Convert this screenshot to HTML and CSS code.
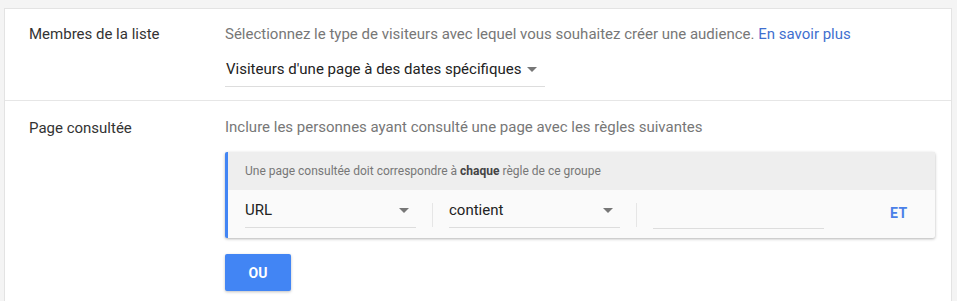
FILE: index.html
```html
<!DOCTYPE html>
<html lang="fr">
<head>
  <meta charset="UTF-8" />
  <title>Audience</title>
  <link rel="stylesheet" href="styles.css">
</head>
<body>
  <div class="card">
    <!-- Membres de la liste -->
    <section class="row first">
      <div class="label">Membres de la liste</div>
      <div class="content">
        <p class="desc">Sélectionnez le type de visiteurs avec lequel vous souhaitez créer une audience. <a href="#">En savoir plus</a></p>
        <div class="select big">
          <span>Visiteurs d'une page à des dates spécifiques</span>
          <span class="arrow"></span>
        </div>
      </div>
    </section>

    <!-- Page consultée -->
    <section class="row second">
      <div class="label">Page consultée</div>
      <div class="content">
        <p class="desc">Inclure les personnes ayant consulté une page avec les règles suivantes</p>
        <div class="rule-box">
          <div class="rule-head">Une page consultée doit correspondre à <strong>chaque</strong> règle de ce groupe</div>
          <div class="rule-row">
            <div class="select field url">
              <span>URL</span>
              <span class="arrow"></span>
            </div>
            <div class="sep"></div>
            <div class="select field op">
              <span>contient</span>
              <span class="arrow"></span>
            </div>
            <div class="sep"></div>
            <div class="input"></div>
            <a href="#" class="et">ET</a>
          </div>
        </div>
        <button class="ou">OU</button>
      </div>
    </section>
  </div>
</body>
</html>
```

FILE: styles.css
```css
body, p, section, div, a, button {
  margin: 0;
  padding: 0;
  font-family: Roboto, sans-serif;
}

body {
  background-color: #f4f4f4;
  padding: 8px 5px 0 4px;
  overflow: hidden;
}

.card {
  background-color: #fff;
  border: 1px solid #e3e3e3;
  border-bottom: none;
  height: 320px;
}

.row {
  display: flex;
}

.row.first {
  height: 91px;
  border-bottom: 1px solid #e6e6e6;
}

.label {
  width: 196px;
  padding-left: 24px;
  font-size: 15px;
  color: #333;
}

.first .label {
  padding-top: 16px;
}

.second .label {
  padding-top: 18px;
}

.content {
  flex: 1;
}

.desc {
  font-size: 15px;
  color: #777;
  line-height: 20px;
}

.first .desc {
  padding-top: 15px;
}

.second .desc {
  padding-top: 16px;
}

.desc a {
  color: #3f6fcf;
  text-decoration: none;
}

.select {
  display: flex;
  align-items: center;
  justify-content: space-between;
  border-bottom: 1px solid #ddd;
  font-size: 15px;
  color: #222;
  white-space: nowrap;
}

.select.big {
  width: 311px;
  margin-top: 11px;
  height: 28px;
  padding: 0 8px 3px 1px;
}

.arrow {
  flex-shrink: 0;
  width: 0;
  height: 0;
  border-left: 5px solid transparent;
  border-right: 5px solid transparent;
  border-top: 5px solid #777;
}

.rule-box {
  width: 707px;
  margin-top: 15px;
  border-left: 3px solid #4285f4;
  border-radius: 2px;
  box-shadow: 0 1px 3px rgba(0, 0, 0, 0.3);
  background-color: #fafafa;
}

.rule-head {
  background-color: #eee;
  height: 38px;
  line-height: 38px;
  padding-left: 17px;
  font-size: 12px;
  color: #777;
}

.rule-head strong {
  color: #444;
}

.rule-row {
  display: flex;
  align-items: flex-start;
  height: 48px;
  padding-left: 17px;
}

.field {
  width: 171px;
  height: 38px;
  padding-top: 3px;
  box-sizing: border-box;
  padding-right: 7px;
}

.sep {
  width: 1px;
  height: 24px;
  margin: 13px 16px 0 16px;
  background-color: #e6e6e6;
}

.input {
  width: 171px;
  height: 38px;
  border-bottom: 1px solid #ddd;
}

.et {
  margin-left: 66px;
  margin-top: 15px;
  font-size: 14px;
  font-weight: bold;
  color: #4a80e8;
  text-decoration: none;
  letter-spacing: 0.5px;
}

.ou {
  display: block;
  margin-top: 16px;
  width: 66px;
  height: 37px;
  border: none;
  border-radius: 2px;
  background-color: #4285f4;
  color: #fff;
  font-size: 14px;
  font-weight: bold;
  box-shadow: 0 1px 3px rgba(0, 0, 0, 0.25);
}
```
